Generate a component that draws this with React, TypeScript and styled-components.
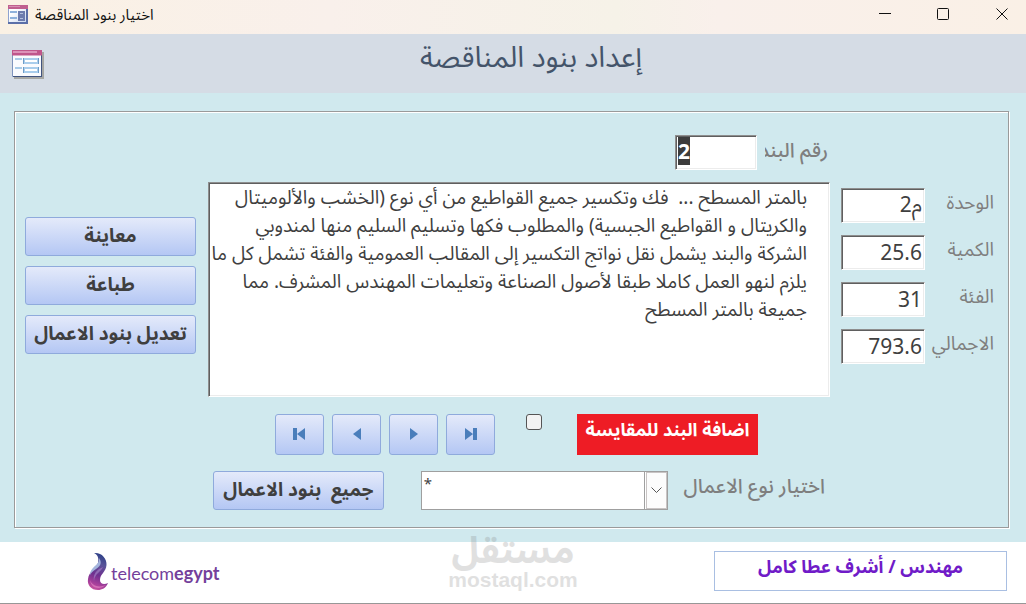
import React from 'react';
import styled, { createGlobalStyle } from 'styled-components';

const GlobalStyle = createGlobalStyle`
  *, *::before, *::after { box-sizing: border-box; }
  body {
    margin: 0;
    background: #fff;
    color: #3f3f3f;
    font-family: 'Noto Sans', 'Noto Sans Arabic', 'DejaVu Sans', sans-serif;
  }
  button, input, select, textarea { font: inherit; color: inherit; margin: 0; }
`;

const Window = styled.div`
  min-height: 100vh;
  display: flex;
  flex-direction: column;
  background: #d0e9ee;
  border-bottom: 1px solid #979797;
`;

const TitleBar = styled.header`
  height: 34px;
  display: flex;
  align-items: center;
  justify-content: space-between;
  background: linear-gradient(90deg, #faf1e4, #f9f0eb 32%, #f6f2e8 60%, #f9f0eb 70%, #faf0e6);
`;

const Caption = styled.div`
  display: flex;
  align-items: center;
  gap: 7px;
  padding: 0 0 6px 8px;
  color: #111;
  font-size: 15px;
  line-height: 20px;
`;

const WindowControls = styled.div`
  display: flex;
  padding-bottom: 6px;
`;

const ControlButton = styled.button`
  width: 58px;
  height: 28px;
  display: flex;
  align-items: center;
  justify-content: center;
  border: 0;
  background: none;
  padding: 0;

  &:last-child { width: 48px; margin-left: 6px; }
`;

const FormHeader = styled.div`
  display: grid;
  grid-template-columns: 72px 1fr 36px;
  align-items: start;
  height: 59px;
  background: #d5dce5;

  & > svg { margin: 16px 0 0 12px; }
`;

const FormTitle = styled.h1`
  margin: 0;
  text-align: center;
  color: #44546a;
  font-size: 29px;
  font-weight: 400;
  line-height: 44px;
`;

const Body = styled.main`
  flex: 1;
  padding: 18px 17px 14px 14px;
`;

const Panel = styled.form`
  height: 100%;
  padding: 23px 12px 17px 10px;
  border: 1px solid #9a9a9a;
  box-shadow: 1px 1px 0 #fff, inset 1px 1px 0 #fff;
  display: grid;
  grid-template-columns: 172px minmax(0, 1fr) 155px;
  column-gap: 11px;
  align-content: start;
`;

const SideButtons = styled.div`
  grid-column: 1;
  grid-row: 2;
  display: flex;
  flex-direction: column;
  gap: 10px;
  padding-top: 35px;
`;

const GradientButton = styled.button<{ $wide?: boolean }>`
  width: ${p => (p.$wide ? '171px' : '49px')};
  height: ${p => (p.$wide ? '39px' : '41px')};
  display: flex;
  align-items: center;
  justify-content: center;
  padding: ${p => (p.$wide ? '0 0 4px' : '0 0 2px')};
  border: 1px solid #8faadc;
  border-radius: 3px;
  background: linear-gradient(#e4eafa, #b4c7f4);
  font-size: 19px;
  font-weight: 700;
  line-height: 30px;
  white-space: pre;
`;

const NumberRow = styled.div`
  grid-column: 2;
  display: flex;
  justify-content: flex-end;
  gap: 8px;
  padding-right: 2px;
  margin-bottom: 12px;
`;

const NumberLabel = styled.label`
  width: 63px;
  overflow: hidden;
  direction: rtl;
  white-space: nowrap;
  color: #7f7f7f;
  font-size: 20px;
  font-weight: 500;
  line-height: 30px;
`;

const sunken = `
  border: 1px solid;
  border-color: #8e8e8e #fff #fff #8e8e8e;
  border-radius: 0;
  outline: 0;
  background: #fff;
  box-shadow: inset 1px 1px 0 #5f5f5f, inset -1px -1px 0 #ececec;
`;

const FieldInput = styled.input<{ $bold?: boolean }>`
  ${sunken}
  width: ${p => (p.$bold ? '82px' : '84px')};
  height: 35px;
  padding: ${p => (p.$bold ? '0 2px 3px' : '0 2px 2px')};
  font-size: 21px;
  font-weight: ${p => (p.$bold ? 700 : 400)};
  line-height: 28px;
  text-align: ${p => (p.$bold ? 'left' : 'right')};

  &::selection { background: #3c3c3c; color: #fff; }
`;

const Description = styled.textarea`
  ${sunken}
  grid-column: 2;
  grid-row: 2;
  display: block;
  width: 100%;
  height: 215px;
  padding: 0 22px 0 2px;
  resize: none;
  overflow: hidden;
  direction: rtl;
  white-space: pre;
  font-size: 19px;
  line-height: 28px;
`;

const Fields = styled.div`
  grid-column: 3;
  grid-row: 2;
  display: flex;
  flex-direction: column;
  gap: 12px;
  padding: 6px 2px 0 0;
`;

const Field = styled.div`
  display: flex;
  align-items: flex-start;
  justify-content: space-between;

  label {
    direction: rtl;
    color: #7f7f7f;
    font-size: 19px;
    line-height: 28px;
  }
`;

const NavRow = styled.div`
  grid-column: 2;
  display: flex;
  align-items: flex-start;
  gap: 8px;
  padding-left: 67px;
  margin-top: 17px;
`;

const AddCheck = styled.input`
  appearance: none;
  width: 16px;
  height: 16px;
  margin: 0 27px 0 23px;
  border: 1px solid #555;
  border-radius: 3px;
  background: #f3f3f3;

  &:checked { background: #4a7ebb; }
`;

const AddLabel = styled.label`
  width: 181px;
  height: 41px;
  background: #ee1c25;
  color: #fff;
  text-align: center;
  direction: rtl;
  font-size: 18px;
  font-weight: 700;
  line-height: 30px;
`;

const FilterRow = styled.div`
  grid-column: 2;
  display: flex;
  align-items: flex-start;
  padding: 0 5px;
  margin-top: 16px;
`;

const Combo = styled.div`
  position: relative;
  width: 247px;
  height: 39px;
  margin: 0 16px 0 37px;
`;

const ComboSelect = styled.select`
  appearance: none;
  width: 100%;
  height: 100%;
  padding: 0 24px 16px 2px;
  border: 1px solid #9f9f9f;
  border-radius: 0;
  background: #fff;
  font-size: 15px;
  line-height: 20px;
`;

const ComboArrow = styled.span`
  position: absolute;
  top: 1px;
  right: 1px;
  bottom: 1px;
  width: 21px;
  display: flex;
  align-items: center;
  justify-content: center;
  border: 1px solid #c8c4c4;
  box-shadow: -1px 0 0 #fff, -2px 0 0 #a0a0a0;
  background: #fcfcfc;
  pointer-events: none;
`;

const FilterLabel = styled.label`
  flex: 1;
  direction: rtl;
  white-space: nowrap;
  color: #7f7f7f;
  font-size: 20px;
  font-weight: 500;
  line-height: 30px;
`;

const Footer = styled.footer`
  position: relative;
  height: 61px;
  display: flex;
  align-items: flex-start;
  justify-content: space-between;
  padding: 9px 19px 0 86px;
  background: #fff;
`;

const Brand = styled.div`
  display: flex;
  align-items: center;
  gap: 2px;
  color: #74409b;
  font-family: Lato, 'Liberation Sans', sans-serif;
  font-size: 18px;
  line-height: 40px;

  span { padding-top: 2px; }
  svg { margin-bottom: 2px; }
`;

const Engineer = styled.div`
  width: 293px;
  height: 40px;
  border: 1px solid #a9bfe2;
  color: #701bc8;
  text-align: center;
  direction: rtl;
  font-size: 18px;
  font-weight: 700;
  line-height: 28px;
`;

const Watermark = styled.div`
  position: absolute;
  left: 50%;
  top: -14px;
  transform: translateX(-50%);
  display: flex;
  flex-direction: column;
  align-items: center;
  color: #787878;
  opacity: 0.22;
  font-weight: 700;
  pointer-events: none;
`;

const WatermarkArabic = styled.span`
  direction: rtl;
  font-size: 37px;
  line-height: 42px;
`;

const WatermarkLatin = styled.span`
  font-family: 'Liberation Sans', sans-serif;
  font-size: 21px;
  line-height: 20px;
`;

const SmallFormIcon = () => (
  <svg width="20" height="19" viewBox="0 0 20 19" aria-hidden="true">
    <defs>
      <linearGradient id="smallPage" x1="0" y1="0" x2="1" y2="1">
        <stop offset="0.3" stopColor="#fff" />
        <stop offset="1" stopColor="#c3d3ee" />
      </linearGradient>
    </defs>
    <rect x="0.5" y="0.5" width="19" height="18" fill="url(#smallPage)" stroke="#8fa3d0" />
    <path d="M0 0h20v4H0z" fill="#c0608f" />
    <path d="M1 1h11v1H1z" fill="#d88fb3" />
    <path d="M2 6h7v2H2zM2 12h7v2H2z" fill="#8fb2dc" />
    <path d="M11 7h5v3h-5zM11 12h5v3h-5z" fill="#b4c2e0" stroke="#6d7cae" strokeWidth="2" />
    <path d="M19 4v15M0 18h20" stroke="#5b6fa8" strokeWidth="2" />
  </svg>
);

const LargeFormIcon = () => (
  <svg width="32" height="29" viewBox="0 0 32 29" aria-hidden="true">
    <path d="M2 2h30v27H2z" fill="#9a9a94" opacity="0.8" />
    <path d="M0 0h30v27H0z" fill="#fff" />
    <path d="M0.5 5v21.5H29.5V5" fill="#fafbfe" stroke="#7e93bd" />
    <path d="M29.5 1v26M1 26.5h29" stroke="#41547f" />
    <path d="M0 0h30v5.500H0z" fill="#c0568b" />
    <path d="M1 1h24v2H1z" fill="#dc92b8" />
    <path d="M3 8h7v2H3zM3 17h7v2H3z" fill="#a9cbe8" />
    <path d="M12 9h14v4H12zM12 18h14v4H12z" fill="#fff" stroke="#a9cdec" strokeWidth="2" />
    <path d="M11.500 8v6M11.500 17v6M26.500 8v6M26.500 17v6" stroke="#6d9cc8" />
  </svg>
);

const FlameLogo = () => (
  <svg width="23" height="38" viewBox="0 0 23 38" aria-hidden="true">
    <defs>
      <linearGradient id="flame" x1="0.6" y1="0" x2="0.4" y2="1">
        <stop offset="0" stopColor="#2b3f86" />
        <stop offset="0.3" stopColor="#5a5499" />
        <stop offset="0.6" stopColor="#6f2f8f" />
        <stop offset="0.85" stopColor="#a8409b" />
        <stop offset="1" stopColor="#c5529f" />
      </linearGradient>
    </defs>
    <path
      d="M8 1C15 0 21 6 20.500 13C20 20 14 22 14 28C14 32 18 33 22 31C20 36 16 38 12 38C5 38 1 33 2 27C3 19 10 17 12 11C13 6 12 3 8 1Z"
      fill="url(#flame)"
    />
    <path d="M13 6C16 10 15 14 10 17C7 19 5 21 4 23C4 18 8 15 11 12C13 10 13.500 8 13 6Z" fill="#a3b4dc" />
    <path d="M17 15C15 20 9 21 8 29C7 24 9 20 13 17Z" fill="#9a76bd" opacity="0.8" />
    <path d="M4 28C6 34 13 36 20 33C14 38 5 37 4 28Z" fill="#e07fc0" opacity="0.7" />
  </svg>
);

const navShapes = [
  { name: 'السجل الأول', d: 'M0 0h4v12H0zM12 0v12L4 6z' },
  { name: 'السجل السابق', d: 'M11 0v12L3 6z' },
  { name: 'السجل التالي', d: 'M3 0v12l8-6z' },
  { name: 'السجل الأخير', d: 'M1 0v12l8-6zM9 0h4v12H9z' },
];

const fields = [
  { id: 'unit', label: 'الوحدة', value: 'م2', dir: 'rtl' },
  { id: 'quantity', label: 'الكمية', value: '25.6', dir: 'ltr' },
  { id: 'rate', label: 'الفئة', value: '31', dir: 'ltr' },
  { id: 'total', label: 'الاجمالي', value: '793.6', dir: 'ltr' },
];

const description = [
  'بالمتر المسطح ...  فك وتكسير جميع القواطيع من أي نوع (الخشب والألوميتال',
  'والكريتال و القواطيع الجبسية) والمطلوب فكها وتسليم السليم منها لمندوبي',
  'الشركة والبند يشمل نقل نواتج التكسير إلى المقالب العمومية والفئة تشمل كل ما',
  'يلزم لنهو العمل كاملا طبقا لأصول الصناعة وتعليمات المهندس المشرف. مما',
  'جميعة بالمتر المسطح',
].join('\n');

export default function App() {
  const itemNumber = React.useRef<HTMLInputElement>(null);

  React.useEffect(() => {
    itemNumber.current?.focus();
    itemNumber.current?.select();
  }, []);

  return (
    <Window>
      <GlobalStyle />
      <TitleBar>
        <Caption>
          <SmallFormIcon />
          <span dir="rtl">اختيار بنود المناقصة</span>
        </Caption>
        <WindowControls>
          <ControlButton type="button" aria-label="تصغير">
            <svg width="12" height="12"><path d="M0 5.500h12" stroke="#111" /></svg>
          </ControlButton>
          <ControlButton type="button" aria-label="تكبير">
            <svg width="12" height="12"><rect x="0.5" y="0.5" width="11" height="11" rx="1" fill="none" stroke="#111" /></svg>
          </ControlButton>
          <ControlButton type="button" aria-label="إغلاق">
            <svg width="12" height="12"><path d="M0.500 0.500l11 11M11.500 0.500l-11 11" stroke="#111" /></svg>
          </ControlButton>
        </WindowControls>
      </TitleBar>

      <FormHeader>
        <LargeFormIcon />
        <FormTitle dir="rtl">إعداد بنود المناقصة</FormTitle>
      </FormHeader>

      <Body>
        <Panel onSubmit={e => e.preventDefault()}>
          <NumberRow>
            <FieldInput $bold ref={itemNumber} id="item-number" defaultValue="2" />
            <NumberLabel htmlFor="item-number">رقم البند</NumberLabel>
          </NumberRow>

          <SideButtons>
            <GradientButton $wide type="button">معاينة</GradientButton>
            <GradientButton $wide type="button">طباعة</GradientButton>
            <GradientButton $wide type="button">تعديل بنود الاعمال</GradientButton>
          </SideButtons>

          <Description aria-label="وصف البند" defaultValue={description} />

          <Fields>
            {fields.map(f => (
              <Field key={f.id}>
                <FieldInput id={f.id} dir={f.dir} defaultValue={f.value} />
                <label htmlFor={f.id}>{f.label}</label>
              </Field>
            ))}
          </Fields>

          <NavRow>
            {navShapes.map(n => (
              <GradientButton key={n.name} type="button" aria-label={n.name}>
                <svg width="14" height="12" viewBox="0 0 14 12"><path d={n.d} fill="#4a7ebb" /></svg>
              </GradientButton>
            ))}
            <AddCheck type="checkbox" id="add-item" />
            <AddLabel htmlFor="add-item">اضافة البند للمقايسة</AddLabel>
          </NavRow>

          <FilterRow>
            <GradientButton $wide type="button" dir="rtl">{'جميع  بنود الاعمال'}</GradientButton>
            <Combo>
              <ComboSelect id="work-type"><option>*</option></ComboSelect>
              <ComboArrow>
                <svg width="11" height="7"><path d="M0.500 0.500l5 5 5-5" fill="none" stroke="#555" /></svg>
              </ComboArrow>
            </Combo>
            <FilterLabel htmlFor="work-type">اختيار نوع الاعمال</FilterLabel>
          </FilterRow>
        </Panel>
      </Body>

      <Footer>
        <Brand>
          <FlameLogo />
          <span>telecom<b>egypt</b></span>
        </Brand>
        <Watermark>
          <WatermarkArabic>مستقل</WatermarkArabic>
          <WatermarkLatin>mostaql.com</WatermarkLatin>
        </Watermark>
        <Engineer>مهندس / أشرف عطا كامل</Engineer>
      </Footer>
    </Window>
  );
}
